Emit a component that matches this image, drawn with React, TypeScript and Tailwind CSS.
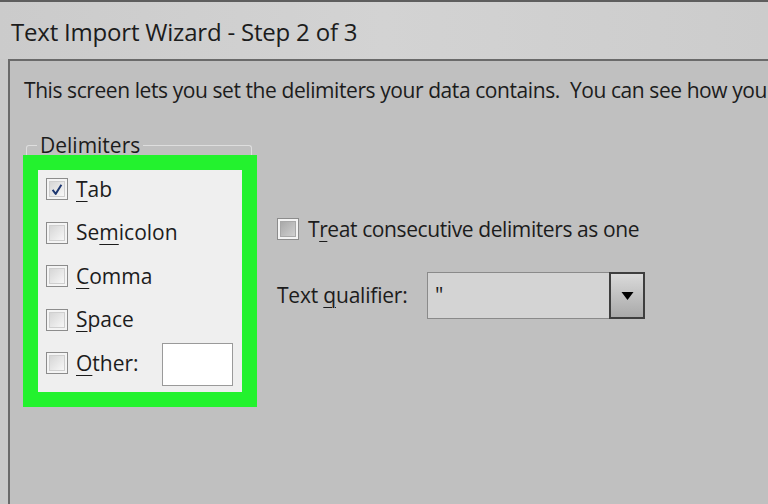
import React from 'react';

// Win7-style checkbox
const Check: React.FC<{ checked?: boolean; dark?: boolean }> = ({ checked, dark }) => (
    <div className="w-[22px] h-[22px] shrink-0 border border-[#8c8c8c] bg-[#f4f4f4] p-[2px]">
        <div
            className={`w-full h-full border flex items-center justify-center ${dark
                ? 'border-[#a8a8a8] bg-gradient-to-br from-[#a9a9a9] to-[#d0d0d0]'
                : 'border-[#cfcfcf] bg-gradient-to-br from-[#d6d6d6] to-[#f7f7f7]'
                }`}
        >
            {checked && (
                <svg viewBox="0 0 16 16" className="w-[15px] h-[15px]">
                    <path d="M3 8.5 L6.5 13 L13 2.5" fill="none" stroke="#1d3770" strokeWidth="2.2" strokeLinejoin="round" />
                </svg>
            )}
        </div>
    </div>
);

const Key: React.FC<{ children: React.ReactNode }> = ({ children }) => (
    <span className="underline decoration-1 underline-offset-[4px]">{children}</span>
);

const Option: React.FC<{ checked?: boolean; children: React.ReactNode }> = ({ checked, children }) => (
    <div className="flex items-center h-[22px] gap-[8px]">
        <Check checked={checked} />
        <span className="leading-none">{children}</span>
    </div>
);

export default function App() {
    return (
        <div
            className="w-[768px] h-[504px] overflow-hidden flex flex-col bg-[#c9c9c9] text-[#1c1c1c]"
            style={{ fontFamily: '"Open Sans", "Noto Sans", sans-serif' }}
        >
            {/* Title bar */}
            <div className="h-[59px] shrink-0 border-t-2 border-[#5e5e5e] bg-gradient-to-r from-[#cbcbcb] via-[#d3d3d3] to-[#cccccc] flex items-center pl-[11px] pt-[3px]">
                <span className="text-[24px] leading-none tracking-[-0.2px]">Text Import Wizard - Step 2 of 3</span>
            </div>

            {/* Wizard body */}
            <div className="flex-1 ml-[8px] border-l-2 border-t-2 border-[#6a6a6a] bg-[#c0c0c0] pt-[15px]">
                <p className="pl-[14px] text-[21px] leading-[28px] whitespace-nowrap tracking-[-0.42px]">
                    This screen lets you set the delimiters your data contains.&nbsp; You can see how you
                </p>

                <div className="flex items-start mt-[31px]">
                    {/* Delimiters group */}
                    <fieldset className="ml-[16px] w-[226px] min-w-0 shrink-0 border border-b-0 border-[#dedede] rounded-t-[3px]">
                        <legend className="ml-[10px] px-[3px] text-[21px] leading-[20px]">Delimiters</legend>
                        <div className="-ml-[4px] w-[234px] h-[252px] border-[15px] border-[#23f22e] bg-[#efefef] pt-[8px] pl-[8px] pr-[9px] flex flex-col gap-[21.5px] text-[21px]">
                            <Option checked><Key>T</Key>ab</Option>
                            <Option>Se<Key>m</Key>icolon</Option>
                            <Option><Key>C</Key>omma</Option>
                            <Option><Key>S</Key>pace</Option>
                            <div className="flex items-center h-[22px] gap-[8px]">
                                <Check />
                                <span className="leading-none"><Key>O</Key>ther:</span>
                                <div className="ml-auto mt-[3px] w-[71px] h-[43px] shrink-0 border border-[#9a9a9a] bg-white" />
                            </div>
                        </div>
                    </fieldset>

                    {/* Options */}
                    <div className="ml-[25px] pt-[83px] flex flex-col text-[21px]">
                        <div className="flex items-center h-[22px] gap-[9px]">
                            <Check dark />
                            <span className="leading-none tracking-[-0.4px]">T<Key>r</Key>eat consecutive delimiters as one</span>
                        </div>
                        <div className="flex items-center mt-[32px]">
                            <span className="w-[150px] leading-none tracking-[-0.2px]">Text <Key>q</Key>ualifier:</span>
                            <div className="flex w-[218px] h-[47px] border border-[#8a8a8a] bg-[#d4d4d4]">
                                <div className="flex-1 pl-[7px] flex items-center leading-none">"</div>
                                <div className="w-[36px] -my-[1px] -mr-[1px] border-2 border-[#3e3e3e] bg-gradient-to-b from-[#dadada] to-[#a9a9a9] flex items-center justify-center">
                                    <svg viewBox="0 0 12 8" className="w-[13px] h-[8px]">
                                        <path d="M0 0 H12 L6 8 Z" fill="#000" />
                                    </svg>
                                </div>
                            </div>
                        </div>
                    </div>
                </div>
            </div>
        </div>
    );
}
